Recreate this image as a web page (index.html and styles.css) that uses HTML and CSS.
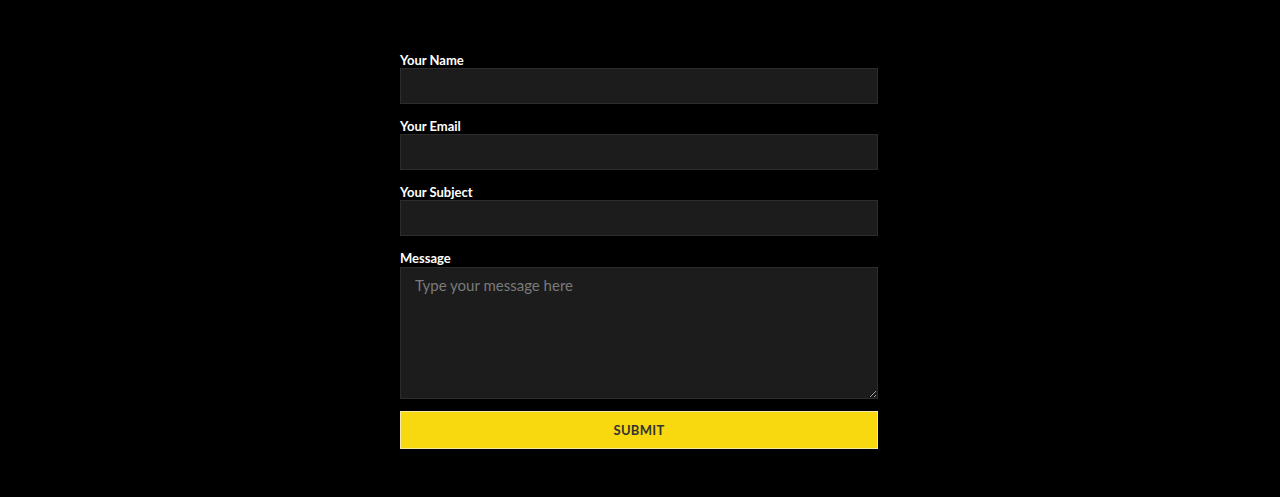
FILE: index.html
```html
<!DOCTYPE html>
<html lang="en">
<head>
<meta charset="utf-8">
<title>Contact</title>
<link rel="stylesheet" href="styles.css">
</head>
<body>
<div class="wrap">
<form class="contact-form">
  <div class="field">
    <label class="field-label" for="name">Your Name</label>
    <input class="field-input" id="name" type="text">
  </div>
  <div class="field">
    <label class="field-label" for="email">Your Email</label>
    <input class="field-input" id="email" type="email">
  </div>
  <div class="field">
    <label class="field-label" for="subject">Your Subject</label>
    <input class="field-input" id="subject" type="text">
  </div>
  <div class="field">
    <label class="field-label field-label-tall" for="message">Message</label>
    <textarea class="field-input field-textarea" id="message" placeholder="Type your message here"></textarea>
  </div>
  <button class="submit-btn" type="button">SUBMIT</button>
</form>
</div>
</body>
</html>
```

FILE: styles.css
```css
html, body {
  margin: 0;
  padding: 0;
  background: #000;
  height: 100%;
}
body {
  font-family: "Lato", "DejaVu Sans", sans-serif;
  color: #fff;
}
.wrap {
  width: 480px;
  margin: 0 auto;
}
.contact-form {
  width: 478px;
  padding-top: 52px;
  display: flex;
  flex-direction: column;
  gap: 14px;
}
.field {
  display: flex;
  flex-direction: column;
}
.field-label {
  font-size: 13px;
  font-weight: 700;
  line-height: 16px;
  height: 16px;
  color: #fff;
}
.field-label-tall {
  height: 17px;
}
.field-input {
  box-sizing: border-box;
  height: 36px;
  width: 100%;
  margin: 0;
  background: #1c1c1c;
  border: 1px solid #2c2c2c;
  outline: none;
  color: #fff;
  font-family: inherit;
  font-size: 15px;
  padding: 0 14px;
}
.field-textarea {
  height: 132px;
  padding: 8px 14px;
  resize: vertical;
  display: block;
}
.field-textarea::placeholder {
  color: #7a7a7a;
}
.submit-btn {
  box-sizing: border-box;
  margin-top: -2px;
  height: 38px;
  width: 100%;
  background: #f8d80f;
  border: 1px solid #f3e9a6;
  color: #333;
  font-family: inherit;
  font-weight: 700;
  font-size: 13px;
  letter-spacing: 0.3px;
  cursor: pointer;
}
```
